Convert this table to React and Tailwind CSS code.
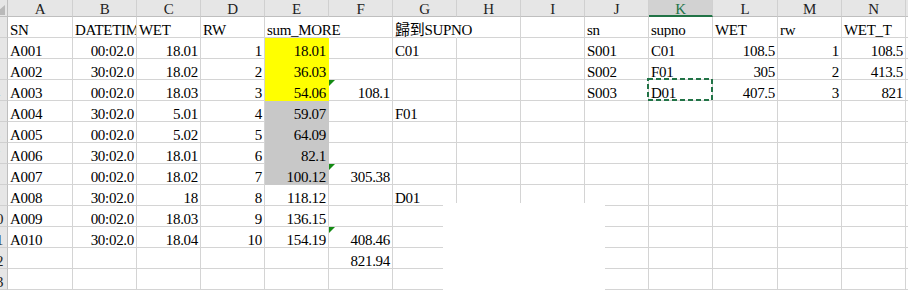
const cols = [
  { key: "A", w: "w-[65px]" },
  { key: "B", w: "w-[64px]" },
  { key: "C", w: "w-[64px]" },
  { key: "D", w: "w-[64px]" },
  { key: "E", w: "w-[64px]" },
  { key: "F", w: "w-[64px]" },
  { key: "G", w: "w-[64px]" },
  { key: "H", w: "w-[64px]" },
  { key: "I", w: "w-[64px]" },
  { key: "J", w: "w-[64px]" },
  { key: "K", w: "w-[64px]" },
  { key: "L", w: "w-[65px]" },
  { key: "M", w: "w-[64px]" },
  { key: "N", w: "w-[64px]" },
  { key: "O", w: "w-[64px]" },
];

const rows = [
  ["SN", "DATETIME", "WET", "RW", "sum_MORE", "", "歸到SUPNO", "", "", "sn", "supno", "WET", "rw", "WET_T"],
  ["A001", "00:02.0", "18.01", "1", "18.01", "", "C01", "", "", "S001", "C01", "108.5", "1", "108.5"],
  ["A002", "30:02.0", "18.02", "2", "36.03", "", "", "", "", "S002", "F01", "305", "2", "413.5"],
  ["A003", "00:02.0", "18.03", "3", "54.06", "108.1", "", "", "", "S003", "D01", "407.5", "3", "821"],
  ["A004", "30:02.0", "5.01", "4", "59.07", "", "F01"],
  ["A005", "00:02.0", "5.02", "5", "64.09"],
  ["A006", "30:02.0", "18.01", "6", "82.1"],
  ["A007", "00:02.0", "18.02", "7", "100.12", "305.38"],
  ["A008", "30:02.0", "18", "8", "118.12", "", "D01"],
  ["A009", "00:02.0", "18.03", "9", "136.15"],
  ["A010", "30:02.0", "18.04", "10", "154.19", "408.46"],
  ["", "", "", "", "", "821.94"],
  [],
];

// cell fills (the fill hides the gridlines of the cell)
const fills = {
  E2: "bg-[#ffff00] border-[#ffff00]",
  E3: "bg-[#ffff00] border-[#ffff00]",
  E4: "bg-[#ffff00] border-[#ffff00]",
  E5: "bg-[#c8c8c8] border-[#c8c8c8]",
  E6: "bg-[#c8c8c8] border-[#c8c8c8]",
  E7: "bg-[#c8c8c8] border-[#c8c8c8]",
  E8: "bg-[#c8c8c8] border-[#c8c8c8]",
};
const spills = { E1: true, G1: true };
const flagged = { F4: true, F8: true, F11: true };

const isNum = (v) => /^[\d.:]+$/.test(v);

const Cell = ({ col, r, value }) => {
  const id = col.key + r;
  const fill = fills[id] || "border-[#d4d4d4]";
  const spill = spills[id];
  const selected = id === "K4";
  return (
    <div
      className={`${col.w} relative h-[21px] shrink-0 border-b border-r px-[2px] pt-[5px] leading-[17px] whitespace-nowrap ${fill} ${
        spill ? "z-10 overflow-visible border-r-white" : selected ? "z-20 overflow-visible" : "overflow-hidden"
      } ${isNum(value) ? "text-right" : "text-left"}`}
    >
      {flagged[id] && (
        <svg className="absolute left-0 top-0" width="6" height="6" viewBox="0 0 6 6">
          <polygon points="0,0 6,0 0,6" fill="#138a13" />
        </svg>
      )}
      {selected && (
        <svg className="absolute -left-[2px] -top-[2px]" width="66" height="23" viewBox="0 0 66 23">
          <rect x="1" y="1" width="64" height="21" fill="none" stroke="#217346" strokeWidth="2" strokeDasharray="5 3" />
        </svg>
      )}
      {value}
    </div>
  );
};

export default function App() {
  return (
    <div className="relative h-[290px] w-[908px] overflow-hidden bg-white [font-family:'Liberation_Serif','Noto_Sans_CJK_TC',serif] text-[15px] tracking-[-0.3px] text-black">
      <div className="-ml-[15px] flex w-max flex-col">
        {/* column letters */}
        <div className="flex h-[17px]">
          <div className="relative h-[17px] w-[23px] shrink-0 border-b border-r border-[#bfbfbf] bg-[#e6e6e6]">
            <svg className="absolute left-[8px] top-[5px]" width="12" height="10" viewBox="0 0 12 10">
              <polygon points="0,10 12,10 12,0" fill="#b9b9b9" />
            </svg>
          </div>
          {cols.map((c) => (
            <div
              key={c.key}
              className={`${c.w} h-[17px] shrink-0 border-r border-[#d0d0d0] pt-[1px] text-center leading-[16px] ${
                c.key === "K"
                  ? "border-b-2 border-b-[#217346] bg-[#d2d2d2] text-[#217346]"
                  : "border-b border-b-[#bfbfbf] bg-[#e6e6e6] text-[#222]"
              }`}
            >
              {c.key}
            </div>
          ))}
        </div>

        {rows.map((row, i) => (
          <div key={i} className="flex">
            <div className="h-[21px] w-[23px] shrink-0 border-b border-r border-b-[#d0d0d0] border-r-[#bfbfbf] bg-[#e6e6e6] pt-[5px] text-center leading-[17px] text-[#222]">
              {i + 1}
            </div>
            {cols.map((c, j) => (
              <Cell key={c.key} col={c} r={i + 1} value={row[j] || ""} />
            ))}
          </div>
        ))}
      </div>

      {/* blank patch in the lower middle of the capture */}
      <div className="absolute left-[443px] top-[203px] h-[87px] w-[162px] bg-white" />
    </div>
  );
}
